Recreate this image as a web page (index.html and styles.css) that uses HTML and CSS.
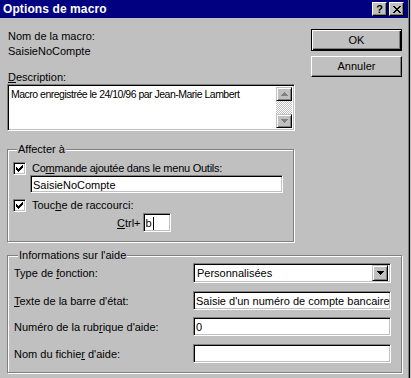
FILE: index.html
```html
<!DOCTYPE html>
<html lang="fr">
<head>
<meta charset="utf-8">
<title>Options de macro</title>
<link rel="stylesheet" href="styles.css">
</head>
<body>
<div class="window">
  <div class="titlebar">
    <span class="title">Options de macro</span>
    <div class="tbtns">
      <span class="tbtn"><span class="q">?</span></span>
      <span class="tbtn">
        <svg width="8" height="7" viewBox="0 0 8 7"><path d="M0 0h2v1h1v1h2v-1h1v-1h2v1h-1v1h-1v1h-1v1h1v1h1v1h1v1h-2v-1h-1v-1h-2v1h-1v1h-2v-1h1v-1h1v-1h1v-1h-1v-1h-1v-1h-1z" fill="#000"/></svg>
      </span>
    </div>
  </div>
  <div class="body">
    <div class="top">
      <div class="leftcol">
        <div class="lbl">Nom de la macro:</div>
        <div class="lbl name">SaisieNoCompte</div>
        <div class="lbl desc-lbl"><u>D</u>escription:</div>
        <div class="sunken desc">
          <div class="desc-text">Macro enregistrée le 24/10/96 par Jean-Marie Lambert</div>
          <div class="vscroll">
            <span class="sbtn"><svg width="7" height="4" viewBox="0 0 7 4"><path d="M3 0h1v1h1v1h1v1h1v1h-7v-1h1v-1h1v-1h1z" fill="#808080"/></svg></span>
            <span class="track"></span>
            <span class="sbtn"><svg width="7" height="4" viewBox="0 0 7 4"><path d="M0 0h7v1h-1v1h-1v1h-1v1h-1v-1h-1v-1h-1v-1h-1z" fill="#808080"/></svg></span>
          </div>
        </div>
      </div>
      <div class="btncol">
        <div class="btn default"><span class="btn-in">OK</span></div>
        <div class="btn"><span class="btn-in">Annuler</span></div>
      </div>
    </div>

    <div class="group affecter">
      <span class="legend">Affecter à</span>
      <div class="chkrow first">
        <span class="chk"><svg width="7" height="7" viewBox="0 0 7 7"><path d="M6 0h1v3h-1v1h-1v1h-1v1h-1v1h-1v-1h-1v-1h-1v-3h1v1h1v1h1v-1h1v-1h1v-1h1z" fill="#000"/></svg></span>
        <span class="tight">Co<u>m</u>mande ajoutée dans le menu Outils:</span>
      </div>
      <div class="sunken field cmd">SaisieNoCompte</div>
      <div class="chkrow">
        <span class="chk"><svg width="7" height="7" viewBox="0 0 7 7"><path d="M6 0h1v3h-1v1h-1v1h-1v1h-1v1h-1v-1h-1v-1h-1v-3h1v1h1v1h1v-1h1v-1h1v-1h1z" fill="#000"/></svg></span>
        <span>Touc<u>h</u>e de raccourci:</span>
      </div>
      <div class="ctrlrow">
        <span><u>C</u>trl+</span>
        <div class="sunken field key">b<span class="caret"></span></div>
      </div>
    </div>

    <div class="group aide">
      <span class="legend">Informations sur l'aide</span>
      <div class="row">
        <span>Type de <u>f</u>onction:</span>
        <div class="sunken field combo">
          <span class="combo-text">Personnalisées</span>
          <span class="sbtn dd"><svg width="7" height="4" viewBox="0 0 7 4"><path d="M0 0h7v1h-1v1h-1v1h-1v1h-1v-1h-1v-1h-1v-1h-1z" fill="#000"/></svg></span>
        </div>
      </div>
      <div class="row">
        <span><u>T</u>exte de la barre d'état:</span>
        <div class="sunken field wide">Saisie d'un numéro de compte bancaire</div>
      </div>
      <div class="row up1">
        <span>Numéro de la rub<u>r</u>ique d'aide:</span>
        <div class="sunken field wide">0</div>
      </div>
      <div class="row">
        <span>Nom du fichie<u>r</u> d'aide:</span>
        <div class="sunken field wide"></div>
      </div>
    </div>
  </div>
</div>
</body>
</html>
```

FILE: styles.css
```css
* { box-sizing: border-box; }
html, body { margin: 0; padding: 0; }
body {
  background: #c0c0c0;
  font-family: "Liberation Sans", Arial, sans-serif;
  font-size: 11px;
  color: #000;
  width: 411px;
  height: 378px;
  overflow: hidden;
}
u { text-decoration: underline; text-underline-offset: 1px; }

.window {
  width: 409px;
  height: 378px;
  border-right: 1px solid #808080;
  box-shadow: 1px 0 0 #000;
  display: flex;
  flex-direction: column;
}

.titlebar {
  height: 18px;
  background: #000080;
  color: #fff;
  display: flex;
  align-items: center;
  justify-content: space-between;
  padding: 0 4px 0 3px;
}
.title { font-weight: bold; font-size: 12px; letter-spacing: 0.1px; }
.tbtns { display: flex; gap: 2px; }
.tbtn {
  width: 15px; height: 14px;
  background: #c0c0c0;
  border: 1px solid;
  border-color: #fff #000 #000 #fff;
  box-shadow: inset -1px -1px 0 #808080;
  display: flex; align-items: center; justify-content: center;
  color: #000;
}
.q { font-weight: bold; font-size: 11px; line-height: 1; }

.body {
  padding: 12px 0 0 7px;
  display: flex;
  flex-direction: column;
}
.top { display: flex; gap: 16px; }
.leftcol { width: 288px; display: flex; flex-direction: column; }
.lbl { line-height: 13px; padding-left: 1px; }
.name { margin-top: 2px; }
.desc-lbl { margin-top: 13px; }

.sunken {
  background: #fff;
  border: 1px solid;
  border-color: #808080 #fff #fff #808080;
  box-shadow: inset 1px 1px 0 #000, inset -1px -1px 0 #c0c0c0;
}
.desc {
  height: 47px;
  display: flex;
  padding: 2px;
}
.desc-text {
  flex: 1;
  padding: 1px 1px;
  line-height: 13px;
  font-size: 10.5px;
  letter-spacing: -0.5px;
  white-space: nowrap;
  overflow: hidden;
}
.vscroll { width: 16px; display: flex; flex-direction: column; }
.sbtn {
  width: 16px; height: 16px;
  background: #c0c0c0;
  border: 1px solid;
  border-color: #c0c0c0 #000 #000 #c0c0c0;
  box-shadow: inset 1px 1px 0 #fff, inset -1px -1px 0 #808080;
  display: flex; align-items: center; justify-content: center;
}
.vscroll .sbtn { height: 14px; }
.track {
  flex: 1;
  background-image: repeating-conic-gradient(#fff 0 25%, #c0c0c0 0 50%);
  background-size: 2px 2px;
}

.btncol { display: flex; flex-direction: column; gap: 5px; margin-top: -1px; }
.btn {
  width: 91px; height: 21px;
  background: #c0c0c0;
  border: 1px solid;
  border-color: #fff #000 #000 #fff;
  box-shadow: inset -1px -1px 0 #808080;
  display: flex; align-items: center; justify-content: center;
}
.btn.default {
  height: 22px;
  border: 1px solid #000;
  box-shadow: inset 1px 1px 0 #fff, inset -1px -1px 0 #000, inset -2px -2px 0 #808080;
}
.btn-in { line-height: 13px; }

.group {
  border: 1px solid #808080;
  box-shadow: inset 1px 1px 0 #fff, 1px 1px 0 #fff;
  display: flex;
  flex-direction: column;
}
.legend {
  align-self: flex-start;
  background: #c0c0c0;
  line-height: 13px;
  padding: 0 1px 0 1px;
  margin: -7px 0 0 4px;
}
.affecter {
  width: 287px;
  margin-top: 18px;
  height: 93px;
  padding: 0 0 0 5px;
}
.chkrow { display: flex; align-items: center; gap: 6px; height: 13px; line-height: 13px; }
.chkrow.first { margin-top: 6px; }
.tight { letter-spacing: -0.25px; }
.chk {
  width: 13px; height: 13px;
  background: #fff;
  border: 1px solid;
  border-color: #808080 #fff #fff #808080;
  box-shadow: inset 1px 1px 0 #000, inset -1px -1px 0 #c0c0c0;
  display: flex; align-items: center; justify-content: center;
}
.field { height: 18px; line-height: 14px; padding: 2px 2px 0 2px; white-space: nowrap; overflow: hidden; }
.cmd { width: 253px; margin: 0 0 6px 17px; }
.ctrlrow { display: flex; align-items: center; gap: 2px; margin: 1px 0 0 104px; }
.key { width: 28px; height: 19px; }
.caret { display: inline-block; width: 1px; height: 13px; background: #000; vertical-align: -3px; margin-left: 1px; }

.aide {
  width: 395px;
  margin-top: 13px;
  height: 118px;
  padding: 0 10px 0 6px;
  gap: 8px;
}
.aide .legend { margin-bottom: -7px; }
.row { display: flex; align-items: center; justify-content: space-between; height: 19px; }
.row.up1 { margin-top: -1px; }
.row:first-of-type { height: 20px; }
.wide { width: 198px; height: 19px; }
.combo { width: 198px; height: 20px; display: flex; align-items: center; padding: 2px; }
.combo-text { flex: 1; padding-left: 1px; }
.dd { width: 16px; height: 16px; }
```
